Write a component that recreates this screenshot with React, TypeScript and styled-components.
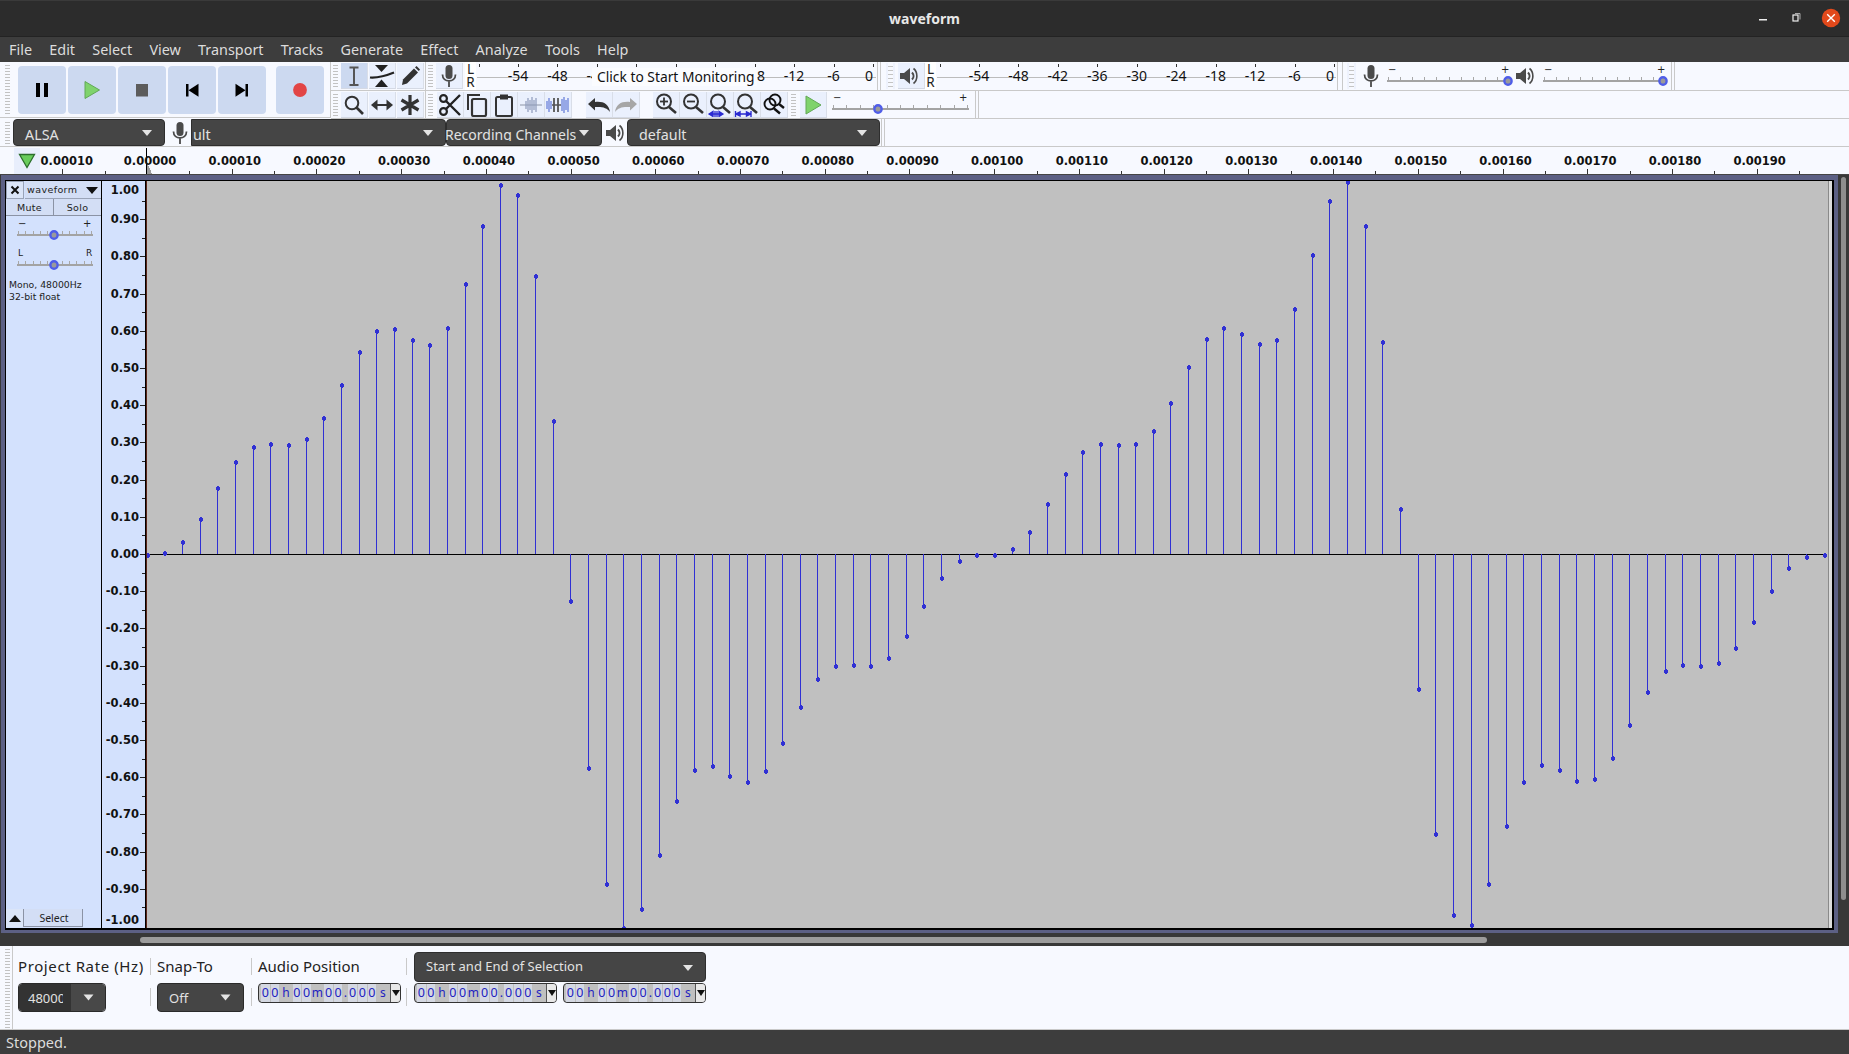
import React from "react";
import styled, { createGlobalStyle } from "styled-components";

const GlobalStyle = createGlobalStyle`
  html, body {
    margin: 0;
    padding: 0;
    background: #3c3c3c;
    overflow: hidden;
  }
  * {
    box-sizing: border-box;
  }
`;

const UI_FONT = `"Noto Sans", "Open Sans", sans-serif`;
const RULER_FONT = `"DejaVu Sans", sans-serif`;
const TOOLBAR_BG = "#f7f9ff";
const LINE = "#c9c9c9";

const MENU = ["File", "Edit", "Select", "View", "Transport", "Tracks", "Generate", "Effect", "Analyze", "Tools", "Help"];

// sample tips, measured from the reference, y relative to the top of the crop
const TIPS = [
  783, 779, 757, 710, 646, 592, 561, 555, 557, 545, 501, 433, 365, 322, 318, 340, 351, 316, 225, 105, 21, 41, 208, 507,
  879, 1223, 1463, 1553, 1514, 1403, 1291, 1227, 1219, 1240, 1252, 1230, 1172, 1098, 1040, 1013, 1011, 1013, 996, 951, 889, 831, 796, 784,
  784, 771, 736, 679, 617, 571, 555, 557, 555, 528, 470, 396, 338, 316, 328, 349, 340, 276, 165, 54, 15, 105, 344, 689,
  1060, 1360, 1527, 1547, 1463, 1343, 1252, 1217, 1227, 1250, 1246, 1203, 1135, 1067, 1023, 1011, 1013, 1007, 976, 922, 858, 811, 788, 784,
];

const App = () => {
  return (
    <Window>
      <GlobalStyle />
      <TitleBar>
        <Title>waveform</Title>
        <WindowButtons>
          <svg width="90" height="20" viewBox="0 0 90 20">
            <rect x="0" y="11" width="8" height="1.5" fill="#eee" />
            <rect x="34" y="7" width="5" height="6" fill="none" stroke="#eee" strokeWidth="1.2" />
            <path d="M36 5.5h5v6" fill="none" stroke="#aaa" strokeWidth="1" />
            <circle cx="72" cy="10" r="9.2" fill="#e2491b" />
            <path d="M68.2 6.2l7.6 7.6M75.8 6.2l-7.6 7.6" stroke="#fff" strokeWidth="1.4" />
          </svg>
        </WindowButtons>
      </TitleBar>

      <MenuBar>
        {MENU.map((item) => (
          <MenuItem key={item}>{item}</MenuItem>
        ))}
      </MenuBar>

      <TopDock>
        <TransportBar>
          <Grip $ml={5} />
          <TransportButton $ml={8}>
            <svg width="14" height="16" viewBox="0 0 14 16">
              <rect x="1" y="1" width="4" height="14" fill="#000" />
              <rect x="9" y="1" width="4" height="14" fill="#000" />
            </svg>
          </TransportButton>
          <TransportButton $ml={2}>
            <svg width="18" height="20" viewBox="0 0 18 20">
              <path d="M2 1.5L16.5 10L2 18.5Z" fill="#7fd36c" stroke="#62a857" strokeWidth="1" />
            </svg>
          </TransportButton>
          <TransportButton $ml={2}>
            <svg width="14" height="14" viewBox="0 0 14 14">
              <rect x="1" y="1" width="12" height="12.5" fill="#5c5c5c" />
            </svg>
          </TransportButton>
          <TransportButton $ml={2}>
            <svg width="14" height="14" viewBox="0 0 14 14">
              <rect x="1" y="1" width="2.5" height="12.5" fill="#000" />
              <path d="M13.5 .8V13.7L3.5 7.2Z" fill="#000" />
            </svg>
          </TransportButton>
          <TransportButton $ml={2}>
            <svg width="14" height="14" viewBox="0 0 14 14">
              <rect x="10.5" y="1" width="2.5" height="12.5" fill="#000" />
              <path d="M.5 .8V13.7L10.5 7.2Z" fill="#000" />
            </svg>
          </TransportButton>
          <TransportButton $ml={10}>
            <svg width="16" height="16" viewBox="0 0 16 16">
              <circle cx="8" cy="8" r="6.9" fill="#e24545" />
            </svg>
          </TransportButton>
        </TransportBar>

        <DockRows>
          <DockRow $h={29}>
            <Grip $ml={2} />
            <ToolButton $ml={3} $pressed>
              <IBeamIcon />
            </ToolButton>
            <ToolButton $ml={1}>
              <EnvelopeIcon />
            </ToolButton>
            <ToolButton $ml={1}>
              <PencilIcon />
            </ToolButton>
            <VLine $ml={1} />
            <Grip $ml={2} />
            <ToolButton $ml={3}>
              <MicIcon />
            </ToolButton>
            <MeterLetters $ml={2}>
              <span>L</span>
              <span>R</span>
            </MeterLetters>
            <Meter zero={397}>
              <MonitorTip>Click to Start Monitoring</MonitorTip>
            </Meter>
            <VLine $ml={1} />
            <VLine $ml={2} />
            <Grip $ml={5} $boxed />
            <ToolButton $ml={3}>
              <SpeakerIcon nudge={-2} />
            </ToolButton>
            <MeterLetters>
              <span>L</span>
              <span>R</span>
            </MeterLetters>
            <Meter zero={398} />
            <VLine $ml={1} />
            <VLine $ml={4} />
            <Grip $ml={4} $boxed />
            <MixerIcon $ml={5}>
              <MicIcon />
            </MixerIcon>
            <SliderSlot $ml={6} $mt={3}>
              <Slider width={124} thumb={121} ticks={11} />
            </SliderSlot>
            <MixerIcon $ml={0}>
              <SpeakerIcon />
            </MixerIcon>
            <SliderSlot $ml={8} $mt={3}>
              <Slider width={124} thumb={120} ticks={11} />
            </SliderSlot>
            <VLine />
            <VLine $ml={2} />
          </DockRow>

          <DockRow $h={28}>
            <Grip $ml={2} />
            <ToolButton $ml={3}>
              <ZoomIcon />
            </ToolButton>
            <ToolButton $ml={1}>
              <TimeShiftIcon />
            </ToolButton>
            <ToolButton $ml={1}>
              <MultiIcon />
            </ToolButton>
            <VLine $ml={1} />
            <Grip $ml={2} />
            <ToolButton $ml={4}>
              <CutIcon />
            </ToolButton>
            <ToolButton>
              <CopyIcon />
            </ToolButton>
            <ToolButton>
              <PasteIcon />
            </ToolButton>
            <ToolButton>
              <TrimIcon />
            </ToolButton>
            <ToolButton>
              <SilenceIcon />
            </ToolButton>
            <ToolButton $ml={14}>
              <UndoIcon color="#333" />
            </ToolButton>
            <ToolButton>
              <UndoIcon color="#a6a6a6" flip />
            </ToolButton>
            <ToolButton $ml={13}>
              <MagnifierIcon kind="in" />
            </ToolButton>
            <ToolButton>
              <MagnifierIcon kind="out" />
            </ToolButton>
            <ToolButton>
              <MagnifierIcon kind="selection" />
            </ToolButton>
            <ToolButton>
              <MagnifierIcon kind="project" />
            </ToolButton>
            <ToolButton>
              <ToggleZoomIcon />
            </ToolButton>
            <Grip $ml={3} />
            <ToolButton $ml={4}>
              <svg width="20" height="22" viewBox="0 0 20 22">
                <path d="M3 2L18 11L3 20Z" fill="#7fd36c" stroke="#62a857" />
              </svg>
            </ToolButton>
            <SliderSlot $ml={5} $mt={2}>
              <Slider width={137} thumb={46} ticks={11} />
            </SliderSlot>
            <VLine $ml={2} />
            <VLine $ml={2} />
          </DockRow>
        </DockRows>
      </TopDock>

      <DeviceRow>
        <Grip $ml={5} />
        <Combo $ml={3} $w={152} $pl={11} $arrow={17}>
          <span>ALSA</span>
        </Combo>
        <DeviceIcon $ml={7}>
          <MicIcon />
        </DeviceIcon>
        <Combo $ml={3} $w={255} $pl={1} $arrow={17} $squareLeft>
          <span>ult</span>
        </Combo>
        <Combo $w={156} $pl={0} $arrow={17}>
          <ClippedLabel>Recording Channels</ClippedLabel>
        </Combo>
        <DeviceIcon $ml={5}>
          <SpeakerIcon />
        </DeviceIcon>
        <Combo $ml={4} $w={253} $pl={11} $arrow={17}>
          <span>default</span>
        </Combo>
        <VLine $ml={1} />
        <VLine $ml={2} />
      </DeviceRow>

      <TimeRuler />

      <MainArea>
        <TrackDock>
          <TrackFrame>
            <TrackPanel>
              <PanelTop>
                <CloseButton>
                  <svg width="10" height="10" viewBox="0 0 10 10">
                    <path d="M1.5 1.5l7 7M8.5 1.5l-7 7" stroke="#111" strokeWidth="2" />
                  </svg>
                </CloseButton>
                <TrackName>
                  <span>waveform</span>
                  <DownTriangle />
                </TrackName>
              </PanelTop>
              <MuteSolo>
                <PanelButton>Mute</PanelButton>
                <PanelButton>Solo</PanelButton>
              </MuteSolo>
              <PanelSlider $mt={3}>
                <Slider width={76} thumb={37} ticks={11} />
              </PanelSlider>
              <PanelSlider $mt={6}>
                <Slider width={76} thumb={37} ticks={11} left="L" right="R" />
              </PanelSlider>
              <TrackInfo>
                Mono, 48000Hz
                <br />
                32-bit float
              </TrackInfo>
              <PanelBottom>
                <CollapseButton>
                  <UpTriangle />
                </CollapseButton>
                <SelectButton>Select</SelectButton>
              </PanelBottom>
            </TrackPanel>
            <VerticalRuler />
            <PlayLine />
            <WavePlot>
              <Waveform />
            </WavePlot>
            <PlotEdge />
          </TrackFrame>
        </TrackDock>
        <VScroll>
          <VThumb />
        </VScroll>
      </MainArea>

      <HScroll>
        <HThumb />
      </HScroll>

      <SelectionBar>
        <Grip $ml={5} />
        <BarLine />
        <BarGroup $w={132} $ml={5}>
          <BarLabel $spacing={0.6}>Project Rate (Hz)</BarLabel>
          <RateCombo>
            <RateValue>
              <span>48000</span>
            </RateValue>
            <RateArrow>
              <DownCaret />
            </RateArrow>
          </RateCombo>
        </BarGroup>
        <BarSep />
        <BarGroup $w={94} $ml={6}>
          <BarLabel>Snap-To</BarLabel>
          <SnapCombo>
            <span>Off</span>
            <DownCaret />
          </SnapCombo>
        </BarGroup>
        <BarSep />
        <BarGroup $w={148} $ml={6}>
          <BarLabel>Audio Position</BarLabel>
          <TimeControl />
        </BarGroup>
        <BarSep />
        <SelectionGroup>
          <Combo $w={292} $h={30} $pl={11} $arrow={17} $small>
            <span>Start and End of Selection</span>
          </Combo>
          <TimePair>
            <TimeControl />
            <TimeControl />
          </TimePair>
        </SelectionGroup>
      </SelectionBar>

      <StatusBar>Stopped.</StatusBar>
    </Window>
  );
};

export default App;

/* ------- drawn parts ------- */

const Meter = ({ zero, children }: { zero: number; children?: React.ReactNode }) => {
  const marks = ["0", "-6", "-12", "-18", "-24", "-30", "-36", "-42", "-48", "-54"];
  const step = 39.45;
  return (
    <MeterBody>
      <svg width="400" height="28">
        <rect x="1" y="15" width="399" height="1" fill="#bcbcbc" />
        {marks.map((_, i) => (
          <rect key={i} x={Math.round(zero - i * step)} y="2" width="1" height="3" fill="#333" />
        ))}
        <rect x={Math.round(zero - 10 * step)} y="2" width="1" height="3" fill="#333" />
      </svg>
      {marks.map((mark, i) => (
        <MeterMark key={mark} style={{ left: zero - i * step - (i === 0 ? 4 : 0) }}>
          {mark}
        </MeterMark>
      ))}
      {children}
    </MeterBody>
  );
};

const Slider = ({
  width,
  thumb,
  ticks,
  left = "−",
  right = "+",
}: {
  width: number;
  thumb: number;
  ticks: number;
  left?: string;
  right?: string;
}) => {
  const isPan = left === "L";
  const inset = 1;
  const lastTick = width - 2;
  return (
    <svg width={width + 4} height="24" viewBox={`0 0 ${width + 4} 24`} style={{ overflow: "visible" }}>
      <text x={inset} y={isPan ? 7 : 8} fontSize={isPan ? 9 : 10} fontFamily={RULER_FONT} fill="#222">
        {left}
      </text>
      <text x={lastTick - (isPan ? 5 : 8)} y={isPan ? 7 : 8} fontSize={isPan ? 9 : 10} fontFamily={RULER_FONT} fill="#222">
        {right}
      </text>
      {Array.from({ length: ticks }).map((_, i) => (
        <rect
          key={i}
          x={Math.round(inset + (i * (lastTick - inset)) / (ticks - 1))}
          y="12"
          width="1"
          height="3"
          fill="#a8a8a8"
        />
      ))}
      <rect x="0" y="15" width={width} height="2" fill="#a3a3a3" />
      <ellipse cx={thumb} cy="16" rx="3.6" ry="3.8" fill="#9a9a9a" stroke="#4f5de8" strokeWidth="2.4" />
    </svg>
  );
};

const Waveform = () => {
  const ZERO = 373;
  return (
    <svg width="1680" height="747" viewBox="0 0 1680 747" shapeRendering="crispEdges">
      <rect x="0" y={ZERO} width="1680" height="1" fill="#000" />
      {TIPS.map((zy, i) => {
        const x = Math.floor(0.3 + i * 17.65);
        const tip = Math.round(175 + zy / 2.063 - 181);
        const top = Math.min(tip, ZERO);
        const height = Math.abs(tip - ZERO);
        return (
          <g key={i} fill="#3030d4">
            <rect x={x} y={top} width="1" height={height} />
            <rect x={x - 1} y={tip - 1} width="4" height="3" />
            <rect x={x} y={tip - 2} width="2" height="5" />
          </g>
        );
      })}
    </svg>
  );
};

const TimeRuler = () => {
  const STEP = 84.72;
  const majors = Array.from({ length: 21 }, (_, i) => i - 1);
  const label = (n: number) => `0.${String(Math.abs(n) * 10).padStart(5, "0")}`;
  return (
    <RulerBar>
      <svg width="1849" height="27" style={{ position: "absolute", left: 0, top: 0 }} shapeRendering="crispEdges">
        {majors.map((n) => (
          <g key={n} fill="#333">
            <rect x={Math.round(147 + n * STEP)} y="22" width="1" height="5" />
            <rect x={Math.round(147 + (n + 0.5) * STEP)} y="24" width="1" height="3" />
          </g>
        ))}
        <rect x="146" y="1" width="1" height="26" fill="#000" />
        <path d="M147 15L152 27H147Z" fill="#9a9a9a" />
      </svg>
      <RulerPlay>
        <svg width="20" height="16" viewBox="0 0 20 16">
          <path d="M2.5 1.5H17.5L10 14.5Z" fill="#69cc5c" stroke="#2c6e2c" strokeWidth="1.3" />
        </svg>
      </RulerPlay>
      {majors.map((n) => (
        <RulerLabel key={n} style={{ left: 150 + n * STEP + (n < 0 ? 1.5 : 0) }}>
          {label(n)}
        </RulerLabel>
      ))}
    </RulerBar>
  );
};

const VerticalRuler = () => {
  const ZERO = 373;
  const UNIT = 372;
  const labels = Array.from({ length: 19 }, (_, i) => 0.9 - i * 0.1);
  return (
    <VRulerBox>
      <svg width="43" height="747" style={{ position: "absolute", left: 0, top: 0 }} shapeRendering="crispEdges">
        {Array.from({ length: 39 }, (_, i) => i - 19).map((n) => (
          <rect
            key={n}
            x={n % 2 === 0 ? 38 : 40}
            y={Math.round(ZERO - (n * UNIT) / 20)}
            width={n % 2 === 0 ? 5 : 3}
            height="1"
            fill="#222"
          />
        ))}
      </svg>
      <VLabel style={{ top: 9 }}>1.00</VLabel>
      {labels.map((v) => (
        <VLabel key={v} style={{ top: ZERO - v * UNIT }}>
          {v.toFixed(2).replace("-0.00", "0.00")}
        </VLabel>
      ))}
      <VLabel style={{ top: 739 }}>-1.00</VLabel>
    </VRulerBox>
  );
};

const TimeControl = () => (
  <TimeBox>
    <TimeCells>
      {"00h00m00.000s".split("").map((c, i) => (
        <TimeCell key={i} $kind={c === "." ? "dot" : /\d/.test(c) ? "digit" : "unit"}>
          {c}
        </TimeCell>
      ))}
    </TimeCells>
    <TimeDrop>
      <svg width="8" height="6" viewBox="0 0 8 6">
        <path d="M0 0H8L4 6Z" fill="#111" />
      </svg>
    </TimeDrop>
  </TimeBox>
);

const DownCaret = () => (
  <svg width="11" height="7" viewBox="0 0 11 7">
    <path d="M.5 .5H10.5L5.5 6.5Z" fill="#e4e4e4" />
  </svg>
);

const DownTriangle = () => (
  <svg width="12" height="8" viewBox="0 0 12 8">
    <path d="M0 1H12L6 8Z" fill="#111" />
  </svg>
);

const UpTriangle = () => (
  <svg width="12" height="7" viewBox="0 0 12 7">
    <path d="M0 7H12L6 0Z" fill="#111" />
  </svg>
);

const IBeamIcon = () => (
  <svg width="16" height="22" viewBox="0 0 16 22">
    <path d="M3.5 2.5H12.5M3.5 20H12.5M8 2.5V20" stroke="#555" strokeWidth="2" fill="none" />
  </svg>
);

const EnvelopeIcon = () => (
  <svg width="26" height="24" viewBox="0 0 26 24">
    <path d="M6 1H19L12.5 8Z" fill="#222" />
    <path d="M6 23H19L12.5 15.5Z" fill="#222" />
    <path d="M1 13.5C8 14 14 13 25 8.5" stroke="#222" strokeWidth="2.2" fill="none" />
  </svg>
);

const PencilIcon = () => (
  <svg width="22" height="22" viewBox="0 0 22 22">
    <path d="M3 20L4 14.5L15 3.5L19 7.5L8 18.5Z" fill="#333" />
    <path d="M16 2.5L17.5 1L21 4.5L19.8 6Z" fill="#333" />
  </svg>
);

const ZoomIcon = () => (
  <svg width="22" height="22" viewBox="0 0 22 22">
    <circle cx="9" cy="9" r="6.3" fill="none" stroke="#333" strokeWidth="2" />
    <path d="M13.5 13.5L20 20" stroke="#333" strokeWidth="2.6" />
  </svg>
);

const TimeShiftIcon = () => (
  <svg width="24" height="16" viewBox="0 0 24 16">
    <path d="M5 7H19V9H5Z" fill="#333" />
    <path d="M7.5 2.5V13.5L1 8Z" fill="#333" />
    <path d="M16.5 2.5V13.5L23 8Z" fill="#333" />
  </svg>
);

const MultiIcon = () => (
  <svg width="22" height="22" viewBox="0 0 22 22">
    <path d="M11 1V21M2.5 6L19.5 16M19.5 6L2.5 16" stroke="#333" strokeWidth="3.2" />
  </svg>
);

const MicIcon = () => (
  <svg width="16" height="24" viewBox="0 0 16 24">
    <rect x="4.5" y="1" width="7" height="14" rx="3.5" fill="#4a4a4a" />
    <path d="M1.5 10.5C1.5 19 14.5 19 14.5 10.5M8 17.5V23" stroke="#4a4a4a" strokeWidth="1.8" fill="none" />
  </svg>
);

const SpeakerIcon = ({ nudge = 0 }: { nudge?: number }) => (
  <SpeakerSvg $nudge={nudge} width="20" height="20" viewBox="0 0 20 20">
    <path d="M1 7H5L11 2V18L5 13H1Z" fill="#4a4a4a" />
    <path d="M13 6.5C15 8.5 15 11.5 13 13.5" stroke="#4a4a4a" strokeWidth="2" fill="none" />
    <path d="M14.5 2.5C19 6 19 14 14.5 17.5" stroke="#4a4a4a" strokeWidth="1.6" fill="none" />
  </SpeakerSvg>
);

const CutIcon = () => (
  <svg width="24" height="24" viewBox="0 0 24 24">
    <circle cx="5.5" cy="5.5" r="3.4" fill="none" stroke="#222" strokeWidth="2.2" />
    <circle cx="5.5" cy="18.5" r="3.4" fill="none" stroke="#222" strokeWidth="2.2" />
    <path d="M8 8L22 22M8 16L22 2" stroke="#222" strokeWidth="2.4" />
  </svg>
);

const CopyIcon = () => (
  <svg width="22" height="24" viewBox="0 0 22 24">
    <path d="M2 17V2H14" fill="none" stroke="#333" strokeWidth="2" />
    <rect x="6" y="6" width="14" height="17" rx="1.5" fill="none" stroke="#333" strokeWidth="2.2" />
  </svg>
);

const PasteIcon = () => (
  <svg width="20" height="24" viewBox="0 0 20 24">
    <rect x="2" y="4" width="16" height="19" rx="1.5" fill="none" stroke="#333" strokeWidth="2" />
    <rect x="6" y="1.5" width="8" height="5" fill="#333" />
  </svg>
);

const TrimIcon = () => (
  <svg width="24" height="20" viewBox="0 0 24 20">
    <path d="M1 10H23" stroke="#9aa3b4" strokeWidth="1.2" />
    <path d="M7 6V14M9 3V17M11 5V15M13 2V18M15 5V15M17 3V17" stroke="#8d9abb" strokeWidth="1.2" />
  </svg>
);

const SilenceIcon = () => (
  <svg width="24" height="20" viewBox="0 0 24 20">
    <path d="M1 6V14M3 3V17M5 6V14M16 4V16M18 2V18M20 5V15M22 3V17" stroke="#5f78d8" strokeWidth="1.2" />
    <path d="M6 10H15" stroke="#555" strokeWidth="1.5" />
    <path d="M8 3V17M12 3V17" stroke="#555" strokeWidth="1.8" />
  </svg>
);

const UndoIcon = ({ color, flip }: { color: string; flip?: boolean }) => (
  <svg width="24" height="16" viewBox="0 0 24 16" style={flip ? { transform: "scaleX(-1)" } : undefined}>
    <path d="M1 7L8 1V5C16 4 22 7 23 15C20 10.5 15 9.5 8 10V13.5Z" fill={color} />
  </svg>
);

const MagnifierIcon = ({ kind }: { kind: "in" | "out" | "selection" | "project" }) => (
  <svg width="26" height="25" viewBox="0 0 26 25">
    <circle cx="11" cy="9.5" r="7" fill="none" stroke="#333" strokeWidth="2" />
    <path d="M16 15L23 21" stroke="#333" strokeWidth="2.6" />
    {kind !== "project" && kind !== "selection" && <path d="M7 9.5H15" stroke="#333" strokeWidth="1.8" />}
    {kind === "in" && <path d="M11 5.5V13.5" stroke="#333" strokeWidth="1.8" />}
    {kind === "selection" && (
      <path d="M2 22H16M8 19V25M10 19V25M2 22L6 19.5V24.5ZM16 22L12 19.5V24.5Z" stroke="#2a2ad0" strokeWidth="1.3" fill="#2a2ad0" />
    )}
    {kind === "project" && (
      <path d="M1.5 22H17M1.5 19V25M17 19V25M2 22L6 20V24ZM16.5 22L12.5 20V24Z" stroke="#2a2ad0" strokeWidth="1.4" fill="#2a2ad0" />
    )}
  </svg>
);

const ToggleZoomIcon = () => (
  <svg width="24" height="24" viewBox="0 0 24 24">
    <circle cx="13" cy="7" r="5.5" fill="none" stroke="#111" strokeWidth="1.9" />
    <circle cx="8" cy="11" r="5.5" fill="none" stroke="#111" strokeWidth="1.9" />
    <path d="M12 15.5L18 20.5M17 11L22 15" stroke="#111" strokeWidth="2.4" />
  </svg>
);

/* ------- styles ------- */

const Window = styled.div`
  width: 1849px;
  height: 1054px;
  display: flex;
  flex-direction: column;
  overflow: hidden;
  position: relative;
  font-family: ${UI_FONT};
  background: ${TOOLBAR_BG};
`;

const TitleBar = styled.div`
  height: 37px;
  flex: none;
  position: relative;
  display: flex;
  align-items: center;
  justify-content: center;
  background: #2c2c2c;
  border-top: 1px solid #3a3a3a;
  border-bottom: 1px solid #232323;
`;

const Title = styled.div`
  color: #e8e8e8;
  font-size: 14px;
  font-weight: 700;
`;

const WindowButtons = styled.div`
  position: absolute;
  right: 0;
  top: 7px;
  display: flex;
`;

const MenuBar = styled.div`
  height: 25px;
  flex: none;
  display: flex;
  align-items: center;
  padding-left: 0.5px;
  background: #3d3d3d;
`;

const MenuItem = styled.div`
  color: #dcdcdc;
  font-size: 14.4px;
  padding: 0 8.6px;
`;

const TopDock = styled.div`
  display: flex;
  flex: none;
  height: 57px;
  background: ${TOOLBAR_BG};
`;

const TransportBar = styled.div`
  width: 331px;
  flex: none;
  display: flex;
  align-items: center;
  height: 56px;
  border-right: 1px solid ${LINE};
  border-bottom: 1px solid ${LINE};
`;

const Grip = styled.div<{ $ml?: number; $boxed?: boolean }>`
  flex: none;
  width: ${({ $boxed }) => ($boxed ? 9 : 5)}px;
  align-self: stretch;
  margin: 1px 0 1px ${({ $ml }) => $ml ?? 0}px;
  background: ${({ $boxed }) =>
    $boxed
      ? `repeating-linear-gradient(to bottom, ${TOOLBAR_BG} 0 3px, #c4c4c4 3px 4px) center / 5px 100% no-repeat, #eef2fd`
      : `repeating-linear-gradient(to bottom, transparent 0 2px, #c2c2c2 2px 3px)`};
`;

const TransportButton = styled.div<{ $ml: number }>`
  width: 48px;
  height: 48px;
  flex: none;
  margin-left: ${({ $ml }) => $ml}px;
  display: flex;
  align-items: center;
  justify-content: center;
  background: #ccd9f0;
  border-radius: 4px;
`;

const DockRows = styled.div`
  flex: 1;
  display: flex;
  flex-direction: column;
`;

const DockRow = styled.div<{ $h: number }>`
  height: ${({ $h }) => $h}px;
  display: flex;
  align-items: stretch;
  border-bottom: 1px solid ${LINE};
`;

const ToolButton = styled.div<{ $ml?: number; $pressed?: boolean }>`
  width: 27px;
  height: 26px;
  margin: 1px 0 0 ${({ $ml }) => $ml ?? 0}px;
  flex: none;
  display: flex;
  align-items: center;
  justify-content: center;
  background: ${({ $pressed }) => ($pressed ? "#ccd9f0" : "#eaf0fd")};
  border-bottom: 1px solid #d4d9e4;
  border-right: 1px solid #d9dee8;
  overflow: hidden;
`;

const VLine = styled.div<{ $ml?: number }>`
  width: 1px;
  flex: none;
  margin-left: ${({ $ml }) => $ml ?? 0}px;
  background: ${LINE};
`;

const MeterLetters = styled.div<{ $ml?: number }>`
  width: 11px;
  flex: none;
  margin-left: ${({ $ml }) => $ml ?? 0}px;
  display: flex;
  flex-direction: column;
  align-items: center;
  padding-top: 1px;
  color: #222;
  font-size: 13.5px;
  line-height: 13px;
  background: #fff;
`;

const MeterBody = styled.div`
  width: 400px;
  flex: none;
  height: 28px;
  position: relative;
  overflow: hidden;
  svg {
    display: block;
  }
`;

const MeterMark = styled.span`
  position: absolute;
  top: 5px;
  transform: translateX(-50%);
  color: #111;
  font-size: 14px;
  line-height: 18px;
  padding: 0 1px;
`;

const MonitorTip = styled.div`
  position: absolute;
  left: 116px;
  top: 6px;
  width: 165px;
  height: 18px;
  padding-left: 5px;
  background: #fbfcff;
  color: #111;
  font-size: 13.8px;
  line-height: 18px;
  white-space: nowrap;
`;

const MixerIcon = styled.div<{ $ml: number }>`
  width: 20px;
  flex: none;
  margin-left: ${({ $ml }) => $ml}px;
  display: flex;
  align-items: center;
  justify-content: center;
`;

const SpeakerSvg = styled.svg<{ $nudge: number }>`
  flex: none;
  transform: translateX(${({ $nudge }) => $nudge}px);
`;

const SliderSlot = styled.div<{ $ml: number; $mt: number }>`
  flex: none;
  margin: ${({ $mt }) => $mt}px 0 0 ${({ $ml }) => $ml}px;
  height: 24px;
  svg {
    display: block;
  }
`;

const DeviceRow = styled.div`
  height: 28px;
  flex: none;
  display: flex;
  border-bottom: 1px solid ${LINE};
`;

const DeviceIcon = styled.div<{ $ml: number }>`
  width: 16px;
  flex: none;
  margin-left: ${({ $ml }) => $ml}px;
  display: flex;
  align-items: center;
  justify-content: center;
  overflow: visible;
`;

const Combo = styled.div<{
  $ml?: number;
  $w: number;
  $h?: number;
  $pl: number;
  $arrow: number;
  $squareLeft?: boolean;
  $small?: boolean;
}>`
  position: relative;
  flex: none;
  width: ${({ $w }) => $w}px;
  height: ${({ $h }) => $h ?? 27}px;
  margin-left: ${({ $ml }) => $ml ?? 0}px;
  padding-left: ${({ $pl }) => $pl}px;
  display: flex;
  align-items: center;
  background: #454545;
  border: 1px solid #2e2e2e;
  border-radius: ${({ $squareLeft }) => ($squareLeft ? "0 4px 4px 0" : "4px")};
  color: #e2e2e2;
  font-size: ${({ $small }) => ($small ? 13 : 14.3)}px;
  white-space: nowrap;

  span {
    position: relative;
    top: ${({ $small }) => ($small ? -1 : 2)}px;
  }

  &::after {
    content: "";
    position: absolute;
    right: ${({ $arrow }) => $arrow - 5}px;
    top: ${({ $small }) => ($small ? 12 : 10)}px;
    border-left: 5px solid transparent;
    border-right: 5px solid transparent;
    border-top: 6px solid #e4e4e4;
  }
`;

// the reference shows this label squeezed: its descenders are cut at the bottom
const ClippedLabel = styled.span`
  display: block;
  margin-left: -2px;
  height: 16px;
  line-height: 20px;
  font-size: 14px;
  overflow: hidden;
  && {
    top: 0;
  }
`;

const RulerBar = styled.div`
  height: 28px;
  flex: none;
  position: relative;
  background: ${TOOLBAR_BG};
  border-bottom: 1px solid #444;
  overflow: hidden;
`;

const RulerPlay = styled.div`
  position: absolute;
  left: 14px;
  top: 1px;
  width: 26px;
  height: 26px;
  display: flex;
  align-items: flex-start;
  justify-content: center;
  padding-top: 5px;
  background: #e8eefc;
`;

const RulerLabel = styled.span`
  position: absolute;
  top: 7px;
  transform: translateX(-50%);
  font-family: ${RULER_FONT};
  font-size: 11.5px;
  font-weight: 700;
  line-height: 15px;
  color: #111;
`;

const MainArea = styled.div`
  height: 758px;
  flex: none;
  display: flex;
  background: #383838;
`;

const TrackDock = styled.div`
  flex: none;
  width: 1837px;
  margin-left: 1px;
  padding: 5px 4px 3px 4px;
  background: #5c6084;
`;

const TrackFrame = styled.div`
  height: 100%;
  display: flex;
  background: #c0c0c0;
  border-style: solid;
  border-color: #000;
  border-width: 1px 2px 2px 1px;
`;

const TrackPanel = styled.div`
  width: 96px;
  flex: none;
  display: flex;
  flex-direction: column;
  background: #d3e1fd;
  border-right: 1px solid #000;
  font-family: ${RULER_FONT};
  color: #222;
`;

const PanelTop = styled.div`
  height: 18px;
  flex: none;
  display: flex;
`;

const CloseButton = styled.div`
  width: 18px;
  flex: none;
  display: flex;
  align-items: center;
  justify-content: center;
  background: #dbe5f8;
  border: 1px solid #9aa4b8;
`;

const TrackName = styled.div`
  flex: 1;
  display: flex;
  align-items: center;
  justify-content: space-between;
  padding: 0 3px 0 2px;
  margin-left: 1px;
  font-size: 9.5px;
  letter-spacing: 0.4px;
  background: #d3def5;
  border-bottom: 1px solid #9aa4b8;
`;

const MuteSolo = styled.div`
  display: flex;
  height: 17px;
  flex: none;
  border-bottom: 1px solid #8b93a5;
`;

const PanelButton = styled.div`
  flex: 1;
  display: flex;
  align-items: center;
  justify-content: center;
  font-size: 9.5px;
  letter-spacing: 0.3px;
  background: #d3def5;
  border-right: 1px solid #8b93a5;
  &:last-child {
    border-right: none;
  }
`;

const PanelSlider = styled.div<{ $mt: number }>`
  margin: ${({ $mt }) => $mt}px 0 0 11px;
  height: 24px;
  flex: none;
  svg {
    display: block;
  }
`;

const TrackInfo = styled.div`
  margin: 6px 0 0 3px;
  font-size: 9.3px;
  line-height: 12px;
`;

const PanelBottom = styled.div`
  margin-top: auto;
  height: 18px;
  flex: none;
  display: flex;
  margin-bottom: 1px;
`;

const CollapseButton = styled.div`
  width: 18px;
  flex: none;
  display: flex;
  align-items: center;
  justify-content: center;
  background: #dbe5f8;
  border-right: 1px solid #8b93a5;
`;

const SelectButton = styled.div`
  width: 59px;
  flex: none;
  display: flex;
  align-items: center;
  justify-content: center;
  padding-left: 2px;
  font-family: ${UI_FONT};
  font-size: 10.5px;
  background: #d3def5;
  border-right: 1px solid #8b93a5;
  border-bottom: 1px solid #8b93a5;
`;

const VRulerBox = styled.div`
  width: 43px;
  flex: none;
  position: relative;
  background: #d3e1fd;
  overflow: hidden;
`;

const VLabel = styled.span`
  position: absolute;
  right: 6px;
  transform: translateY(-50%);
  font-family: ${RULER_FONT};
  font-size: 11.5px;
  font-weight: 700;
  line-height: 14px;
  color: #111;
`;

const PlayLine = styled.div`
  width: 2px;
  flex: none;
  background: linear-gradient(to right, #000 50%, #5a2418 50%);
`;

const WavePlot = styled.div`
  flex: 1;
  min-width: 0;
  overflow: hidden;
  background: #c0c0c0;
  svg {
    display: block;
  }
`;

const PlotEdge = styled.div`
  width: 4px;
  flex: none;
  background: #dcdcdc;
  border-left: 1px solid #8a8a8a;
`;

const VScroll = styled.div`
  flex: 1;
  padding: 2px 3px 33px 3px;
`;

const VThumb = styled.div`
  height: 100%;
  background: #8e8e8e;
  border-radius: 3px;
`;

const HScroll = styled.div`
  height: 13px;
  flex: none;
  padding: 4px 362px 3px 140px;
  background: #383838;
`;

const HThumb = styled.div`
  height: 100%;
  background: #9c9c9c;
  border-radius: 3px;
`;

const SelectionBar = styled.div`
  height: 84px;
  flex: none;
  display: flex;
  background: ${TOOLBAR_BG};
  border-bottom: 1px solid ${LINE};
`;

const BarLine = styled.div`
  width: 1px;
  flex: none;
  margin-left: 2px;
  background: ${LINE};
`;

const BarGroup = styled.div<{ $w: number; $ml: number }>`
  width: ${({ $w }) => $w}px;
  flex: none;
  margin-left: ${({ $ml }) => $ml}px;
  padding-top: 11px;
  display: flex;
  flex-direction: column;
`;

const BarLabel = styled.div<{ $spacing?: number }>`
  height: 18px;
  margin-bottom: 8px;
  color: #222;
  font-size: 15px;
  letter-spacing: ${({ $spacing }) => $spacing ?? 0}px;
  line-height: 18px;
  white-space: nowrap;
`;

const BarSep = styled.div`
  width: 1px;
  flex: none;
  background:
    linear-gradient(${LINE}, ${LINE}) 0 12px / 1px 17px no-repeat,
    linear-gradient(${LINE}, ${LINE}) 0 42px / 1px 18px no-repeat;
`;

const RateCombo = styled.div`
  width: 88px;
  height: 29px;
  display: flex;
  overflow: hidden;
  border: 1px solid #2a2a2a;
  border-radius: 4px;
  color: #e2e2e2;
  font-size: 13px;
`;

const RateValue = styled.div`
  width: 52px;
  flex: none;
  padding-left: 9px;
  display: flex;
  align-items: center;
  background: #333;
  span {
    display: block;
    width: 35px;
    overflow: hidden;
  }
`;

const RateArrow = styled.div`
  flex: 1;
  display: flex;
  align-items: center;
  justify-content: center;
  background: #484848;
`;

const SnapCombo = styled.div`
  width: 87px;
  height: 29px;
  display: flex;
  align-items: center;
  justify-content: space-between;
  padding: 0 12px 0 11px;
  background: #454545;
  border: 1px solid #2a2a2a;
  border-radius: 4px;
  color: #e2e2e2;
  font-size: 13px;
`;

const SelectionGroup = styled.div`
  margin-left: 7px;
  padding-top: 6px;
  display: flex;
  flex-direction: column;
  gap: 1px;
`;

const TimePair = styled.div`
  display: flex;
  gap: 6px;
`;

const TimeBox = styled.div`
  width: 143px;
  height: 20px;
  display: flex;
  overflow: hidden;
  background: #c0c0c0;
  border: 1px solid #333;
  border-radius: 4px;
`;

const TimeCells = styled.div`
  flex: 1;
  display: flex;
  padding-left: 2px;
`;

const TimeCell = styled.div<{ $kind: "digit" | "unit" | "dot" }>`
  width: ${({ $kind }) => ($kind === "digit" ? 9.6 : $kind === "dot" ? 5 : 12.4)}px;
  flex: none;
  text-align: center;
  color: #2222c0;
  font-size: ${({ $kind }) => ($kind === "unit" ? 12 : 12.5)}px;
  line-height: 18px;
  background: ${({ $kind }) => ($kind === "digit" ? "#d4d8e2" : "#c0c0c0")};
  border-right: 1px solid #c0c0c0;
`;

const TimeDrop = styled.div`
  width: 10px;
  flex: none;
  display: flex;
  align-items: center;
  justify-content: center;
  background: #e8e8e8;
  border-left: 1px solid #555;
`;

const StatusBar = styled.div`
  height: 24px;
  flex: none;
  padding-left: 6px;
  display: flex;
  align-items: center;
  background: #3d3d3d;
  color: #dcdcdc;
  font-size: 14.5px;
`;
